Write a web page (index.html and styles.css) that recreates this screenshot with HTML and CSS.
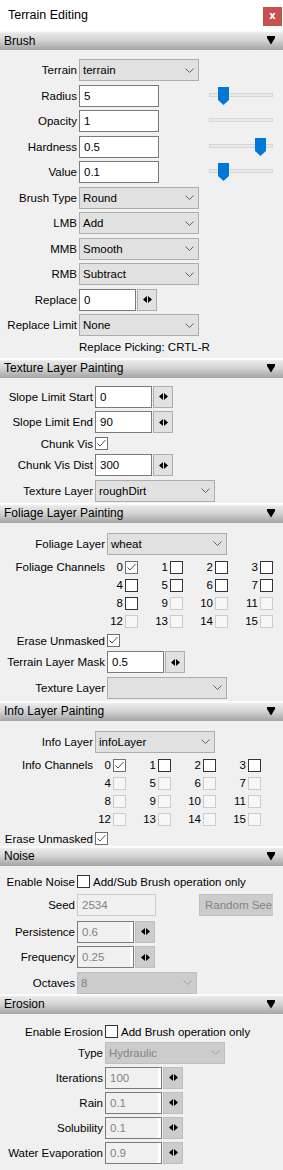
FILE: index.html
```html
<!DOCTYPE html>
<html lang="en">
<head>
    <meta charset="UTF-8">
    <meta name="viewport" content="width=device-width, initial-scale=1.0">
    <title>Terrain Editing</title>
    <link rel="stylesheet" href="styles.css">
</head>
<body>
    <div class="panel">
        <div class="titlebar">
            <span class="title">Terrain Editing</span>
            <span class="close">x</span>
        </div>

        <!-- Brush -->
        <div class="group-head">
            <span>Brush</span>
            <svg class="collapse" width="8" height="9" viewBox="0 0 8 9"><rect x="0" y="0" width="8" height="2"/><polygon points="0,2 8,2 4,8.5"/></svg>
        </div>
        <div class="form form-brush">
            <label>Terrain</label>
            <div class="field"><div class="combo"><span>terrain</span><svg class="chev" width="9" height="5" viewBox="0 0 9 5"><polyline points="0.5,0.5 4.5,4.5 8.5,0.5"/></svg></div></div>

            <label>Radius</label>
            <div class="field"><div class="edit edit-wide">5</div><div class="slider"><svg class="thumb" style="left: 9px" width="11" height="18" viewBox="0 0 11 18"><polygon points="0,0 11,0 11,13 5.5,18 0,13"/></svg></div></div>

            <label>Opacity</label>
            <div class="field"><div class="edit edit-wide">1</div><div class="slider"></div></div>

            <label>Hardness</label>
            <div class="field"><div class="edit edit-wide">0.5</div><div class="slider"><svg class="thumb" style="left: 46px" width="11" height="18" viewBox="0 0 11 18"><polygon points="0,0 11,0 11,13 5.5,18 0,13"/></svg></div></div>

            <label>Value</label>
            <div class="field"><div class="edit edit-wide">0.1</div><div class="slider"><svg class="thumb" style="left: 9px" width="11" height="18" viewBox="0 0 11 18"><polygon points="0,0 11,0 11,13 5.5,18 0,13"/></svg></div></div>

            <label>Brush Type</label>
            <div class="field"><div class="combo"><span>Round</span><svg class="chev" width="9" height="5" viewBox="0 0 9 5"><polyline points="0.5,0.5 4.5,4.5 8.5,0.5"/></svg></div></div>

            <label>LMB</label>
            <div class="field"><div class="combo"><span>Add</span><svg class="chev" width="9" height="5" viewBox="0 0 9 5"><polyline points="0.5,0.5 4.5,4.5 8.5,0.5"/></svg></div></div>

            <label>MMB</label>
            <div class="field"><div class="combo"><span>Smooth</span><svg class="chev" width="9" height="5" viewBox="0 0 9 5"><polyline points="0.5,0.5 4.5,4.5 8.5,0.5"/></svg></div></div>

            <label>RMB</label>
            <div class="field"><div class="combo"><span>Subtract</span><svg class="chev" width="9" height="5" viewBox="0 0 9 5"><polyline points="0.5,0.5 4.5,4.5 8.5,0.5"/></svg></div></div>

            <label>Replace</label>
            <div class="field"><div class="edit edit-short">0</div><div class="spin-btn"><svg width="9" height="7" viewBox="0 0 9 7"><polygon points="0,3.5 4,0 4,7"/><polygon points="5,0 9,3.5 5,7"/></svg></div></div>

            <label>Replace Limit</label>
            <div class="field"><div class="combo"><span>None</span><svg class="chev" width="9" height="5" viewBox="0 0 9 5"><polyline points="0.5,0.5 4.5,4.5 8.5,0.5"/></svg></div></div>

            <label></label>
            <div class="field hint">Replace Picking: CRTL-R</div>
        </div>

        <!-- Texture Layer Painting -->
        <div class="group-head">
            <span>Texture Layer Painting</span>
            <svg class="collapse" width="8" height="9" viewBox="0 0 8 9"><rect x="0" y="0" width="8" height="2"/><polygon points="0,2 8,2 4,8.5"/></svg>
        </div>
        <div class="form form-texture">
            <label>Slope Limit Start</label>
            <div class="field"><div class="edit edit-short">0</div><div class="spin-btn"><svg width="9" height="7" viewBox="0 0 9 7"><polygon points="0,3.5 4,0 4,7"/><polygon points="5,0 9,3.5 5,7"/></svg></div></div>

            <label>Slope Limit End</label>
            <div class="field"><div class="edit edit-short">90</div><div class="spin-btn"><svg width="9" height="7" viewBox="0 0 9 7"><polygon points="0,3.5 4,0 4,7"/><polygon points="5,0 9,3.5 5,7"/></svg></div></div>

            <label>Chunk Vis</label>
            <div class="field field-check"><span class="check on"><svg width="11" height="11" viewBox="0 0 11 11"><polyline points="1.5,5.5 4,8 9.5,2"/></svg></span></div>

            <label>Chunk Vis Dist</label>
            <div class="field"><div class="edit edit-short">300</div><div class="spin-btn"><svg width="9" height="7" viewBox="0 0 9 7"><polygon points="0,3.5 4,0 4,7"/><polygon points="5,0 9,3.5 5,7"/></svg></div></div>

            <label>Texture Layer</label>
            <div class="field"><div class="combo"><span>roughDirt</span><svg class="chev" width="9" height="5" viewBox="0 0 9 5"><polyline points="0.5,0.5 4.5,4.5 8.5,0.5"/></svg></div></div>
        </div>

        <!-- Foliage Layer Painting -->
        <div class="group-head">
            <span>Foliage Layer Painting</span>
            <svg class="collapse" width="8" height="9" viewBox="0 0 8 9"><rect x="0" y="0" width="8" height="2"/><polygon points="0,2 8,2 4,8.5"/></svg>
        </div>
        <div class="form form-foliage">
            <label>Foliage Layer</label>
            <div class="field"><div class="combo"><span>wheat</span><svg class="chev" width="9" height="5" viewBox="0 0 9 5"><polyline points="0.5,0.5 4.5,4.5 8.5,0.5"/></svg></div></div>

            <label class="top">Foliage Channels</label>
            <div class="field">
                <div class="channels">
                    <span class="chan">0<span class="check on"><svg width="11" height="11" viewBox="0 0 11 11"><polyline points="1.5,5.5 4,8 9.5,2"/></svg></span></span>
                    <span class="chan">1<span class="check"></span></span>
                    <span class="chan">2<span class="check"></span></span>
                    <span class="chan">3<span class="check"></span></span>
                    <span class="chan">4<span class="check"></span></span>
                    <span class="chan">5<span class="check"></span></span>
                    <span class="chan">6<span class="check"></span></span>
                    <span class="chan">7<span class="check"></span></span>
                    <span class="chan">8<span class="check"></span></span>
                    <span class="chan">9<span class="check off"></span></span>
                    <span class="chan">10<span class="check off"></span></span>
                    <span class="chan">11<span class="check off"></span></span>
                    <span class="chan">12<span class="check off"></span></span>
                    <span class="chan">13<span class="check off"></span></span>
                    <span class="chan">14<span class="check off"></span></span>
                    <span class="chan">15<span class="check off"></span></span>
                </div>
            </div>

            <label>Erase Unmasked</label>
            <div class="field field-check"><span class="check on"><svg width="11" height="11" viewBox="0 0 11 11"><polyline points="1.5,5.5 4,8 9.5,2"/></svg></span></div>

            <label>Terrain Layer Mask</label>
            <div class="field"><div class="edit edit-short">0.5</div><div class="spin-btn"><svg width="9" height="7" viewBox="0 0 9 7"><polygon points="0,3.5 4,0 4,7"/><polygon points="5,0 9,3.5 5,7"/></svg></div></div>

            <label>Texture Layer</label>
            <div class="field"><div class="combo"><span></span><svg class="chev" width="9" height="5" viewBox="0 0 9 5"><polyline points="0.5,0.5 4.5,4.5 8.5,0.5"/></svg></div></div>
        </div>

        <!-- Info Layer Painting -->
        <div class="group-head">
            <span>Info Layer Painting</span>
            <svg class="collapse" width="8" height="9" viewBox="0 0 8 9"><rect x="0" y="0" width="8" height="2"/><polygon points="0,2 8,2 4,8.5"/></svg>
        </div>
        <div class="form form-info">
            <label>Info Layer</label>
            <div class="field"><div class="combo"><span>infoLayer</span><svg class="chev" width="9" height="5" viewBox="0 0 9 5"><polyline points="0.5,0.5 4.5,4.5 8.5,0.5"/></svg></div></div>

            <label class="top">Info Channels</label>
            <div class="field">
                <div class="channels">
                    <span class="chan">0<span class="check on"><svg width="11" height="11" viewBox="0 0 11 11"><polyline points="1.5,5.5 4,8 9.5,2"/></svg></span></span>
                    <span class="chan">1<span class="check"></span></span>
                    <span class="chan">2<span class="check"></span></span>
                    <span class="chan">3<span class="check"></span></span>
                    <span class="chan">4<span class="check off"></span></span>
                    <span class="chan">5<span class="check off"></span></span>
                    <span class="chan">6<span class="check off"></span></span>
                    <span class="chan">7<span class="check off"></span></span>
                    <span class="chan">8<span class="check off"></span></span>
                    <span class="chan">9<span class="check off"></span></span>
                    <span class="chan">10<span class="check off"></span></span>
                    <span class="chan">11<span class="check off"></span></span>
                    <span class="chan">12<span class="check off"></span></span>
                    <span class="chan">13<span class="check off"></span></span>
                    <span class="chan">14<span class="check off"></span></span>
                    <span class="chan">15<span class="check off"></span></span>
                </div>
            </div>

            <label>Erase Unmasked</label>
            <div class="field field-check"><span class="check on"><svg width="11" height="11" viewBox="0 0 11 11"><polyline points="1.5,5.5 4,8 9.5,2"/></svg></span></div>
        </div>

        <!-- Noise -->
        <div class="group-head">
            <span>Noise</span>
            <svg class="collapse" width="8" height="9" viewBox="0 0 8 9"><rect x="0" y="0" width="8" height="2"/><polygon points="0,2 8,2 4,8.5"/></svg>
        </div>
        <div class="form form-noise">
            <label>Enable Noise</label>
            <div class="field field-check"><span class="check"></span><span class="check-text">Add/Sub Brush operation only</span></div>

            <label>Seed</label>
            <div class="field field-seed"><div class="edit edit-seed disabled">2534</div><div class="button disabled">Random See</div></div>

            <label>Persistence</label>
            <div class="field"><div class="edit edit-short readonly">0.6</div><div class="spin-btn disabled"><svg width="9" height="7" viewBox="0 0 9 7"><polygon points="0,3.5 4,0 4,7"/><polygon points="5,0 9,3.5 5,7"/></svg></div></div>

            <label>Frequency</label>
            <div class="field"><div class="edit edit-short readonly">0.25</div><div class="spin-btn disabled"><svg width="9" height="7" viewBox="0 0 9 7"><polygon points="0,3.5 4,0 4,7"/><polygon points="5,0 9,3.5 5,7"/></svg></div></div>

            <label>Octaves</label>
            <div class="field"><div class="combo disabled"><span>8</span><svg class="chev" width="9" height="5" viewBox="0 0 9 5"><polyline points="0.5,0.5 4.5,4.5 8.5,0.5"/></svg></div></div>
        </div>

        <!-- Erosion -->
        <div class="group-head">
            <span>Erosion</span>
            <svg class="collapse" width="8" height="9" viewBox="0 0 8 9"><rect x="0" y="0" width="8" height="2"/><polygon points="0,2 8,2 4,8.5"/></svg>
        </div>
        <div class="form form-erosion">
            <label>Enable Erosion</label>
            <div class="field field-check"><span class="check"></span><span class="check-text">Add Brush operation only</span></div>

            <label>Type</label>
            <div class="field"><div class="combo disabled"><span>Hydraulic</span><svg class="chev" width="9" height="5" viewBox="0 0 9 5"><polyline points="0.5,0.5 4.5,4.5 8.5,0.5"/></svg></div></div>

            <label>Iterations</label>
            <div class="field"><div class="edit edit-short readonly">100</div><div class="spin-btn disabled"><svg width="9" height="7" viewBox="0 0 9 7"><polygon points="0,3.5 4,0 4,7"/><polygon points="5,0 9,3.5 5,7"/></svg></div></div>

            <label>Rain</label>
            <div class="field"><div class="edit edit-short readonly">0.1</div><div class="spin-btn disabled"><svg width="9" height="7" viewBox="0 0 9 7"><polygon points="0,3.5 4,0 4,7"/><polygon points="5,0 9,3.5 5,7"/></svg></div></div>

            <label>Solubility</label>
            <div class="field"><div class="edit edit-short readonly">0.1</div><div class="spin-btn disabled"><svg width="9" height="7" viewBox="0 0 9 7"><polygon points="0,3.5 4,0 4,7"/><polygon points="5,0 9,3.5 5,7"/></svg></div></div>

            <label>Water Evaporation</label>
            <div class="field"><div class="edit edit-short readonly">0.9</div><div class="spin-btn disabled"><svg width="9" height="7" viewBox="0 0 9 7"><polygon points="0,3.5 4,0 4,7"/><polygon points="5,0 9,3.5 5,7"/></svg></div></div>
        </div>
    </div>
</body>
</html>
```

FILE: styles.css
```css
body {
    margin: 0;
    background-color: #f0f0f0;
    font-family: "Liberation Sans", Arial, sans-serif;
    font-size: 11.5px;
    color: #000;
}
.panel {
    width: 283px;
}
.titlebar {
    height: 30px;
    background-color: #fff;
    display: flex;
    align-items: center;
    justify-content: space-between;
    padding: 0 1px 0 8px;
}
.title {
    font-size: 12.5px;
}
.close {
    align-self: flex-start;
    margin-top: 7px;
    width: 19px;
    height: 19px;
    background-color: #c75050;
    color: #fff;
    font-family: "DejaVu Sans", sans-serif;
    font-weight: bold;
    font-size: 10px;
    line-height: 18px;
    text-align: center;
}
.group-head {
    height: 20px;
    box-sizing: border-box;
    display: flex;
    align-items: center;
    justify-content: space-between;
    padding: 1px 8px 0 4px;
    font-size: 12px;
    background: linear-gradient(#ffffff, #ffffff 5%, #e8e8e8 15%, #d4d4d4 50%, #a4a4a4);
}
.collapse {
    fill: #000;
}
.form {
    display: grid;
    column-gap: 2px;
    row-gap: 3.5px;
    align-items: center;
    padding: 9px 10px 0 0;
}
.form-brush {
    grid-template-columns: 77px 1fr;
    padding-bottom: 4px;
}
.form-texture {
    grid-template-columns: 93px 1fr;
    padding-top: 8px;
    padding-bottom: 1px;
}
.form-foliage {
    grid-template-columns: 105px 1fr;
    padding-top: 10px;
    padding-bottom: 2px;
}
.form-info {
    grid-template-columns: 93px 1fr;
    padding-top: 10px;
}
.form-noise {
    grid-template-columns: 75px 1fr;
    padding-top: 9px;
}
.form-erosion {
    grid-template-columns: 103px 1fr;
    padding-top: 11px;
    row-gap: 3px;
}
label {
    text-align: right;
    white-space: nowrap;
}
label.top {
    align-self: start;
    line-height: 18px;
}
.field {
    display: flex;
    align-items: center;
    min-height: 14px;
}
.hint {
    line-height: 14px;
}
.edit {
    box-sizing: border-box;
    height: 22px;
    border: 1px solid #7a7a7a;
    background-color: #fff;
    padding: 0 4px;
    display: flex;
    align-items: center;
}
.edit-wide {
    width: 80px;
}
.edit-short {
    width: 57px;
}
.edit-seed {
    width: 79px;
}
.edit.disabled {
    border-color: #cccccc;
    background-color: #f0f0f0;
    color: #838383;
}
.edit.readonly {
    color: #838383;
    background: linear-gradient(to right, #f0f0f0 calc(100% - 3px), #fff 0);
    border-color: #7a7a7a;
}
.combo {
    box-sizing: border-box;
    width: 120px;
    height: 22px;
    border: 1px solid #adadad;
    background-color: #e1e1e1;
    display: flex;
    align-items: center;
    justify-content: space-between;
    padding: 0 4px 0 3px;
}
.combo.disabled {
    background-color: #cccccc;
    border-color: #bfbfbf;
    color: #838383;
}
.chev {
    fill: none;
    stroke: #606060;
    stroke-width: 1;
}
.combo.disabled .chev {
    stroke: #a0a0a0;
}
.spin-btn {
    box-sizing: border-box;
    width: 20px;
    height: 22px;
    margin-left: 1px;
    border: 1px solid #adadad;
    background-color: #e1e1e1;
    display: flex;
    align-items: center;
    justify-content: center;
}
.spin-btn svg {
    fill: #000;
}
.spin-btn.disabled {
    background-color: #cccccc;
    border-color: #bfbfbf;
}
.button {
    box-sizing: border-box;
    height: 22px;
    margin-left: auto;
    margin-top: 2px;
    margin-bottom: 1px;
    width: 74px;
    padding-left: 5px;
    white-space: nowrap;
    display: flex;
    align-items: center;
}
.button.disabled {
    background-color: #cccccc;
    border: 1px solid #bfbfbf;
    border-right: none;
    color: #838383;
}
.slider {
    position: relative;
    margin-left: auto;
    width: 64px;
    height: 22px;
}
.slider::before {
    content: "";
    position: absolute;
    left: 0;
    right: 0;
    top: 8px;
    height: 4px;
    box-sizing: border-box;
    border: 1px solid #d6d6d6;
    background-color: #e7eaea;
}
.thumb {
    position: absolute;
    top: 2px;
    fill: #0078d7;
}
.check {
    box-sizing: border-box;
    width: 13px;
    height: 13px;
    border: 1px solid #333;
    background-color: #fff;
    display: inline-flex;
    align-items: center;
    justify-content: center;
    flex: none;
}
.check.on {
    border-color: #707070;
}
.check.off {
    border-color: #cccccc;
    background-color: #f7f7f7;
}
.check svg {
    fill: none;
    stroke: #505050;
    stroke-width: 1;
}
.check-text {
    margin-left: 3px;
    white-space: nowrap;
}
.channels {
    display: grid;
    grid-template-columns: repeat(4, 31px);
    grid-auto-rows: 18px;
    column-gap: 14px;
}
.chan {
    display: flex;
    align-items: center;
    justify-content: flex-end;
    gap: 2px;
}
```
